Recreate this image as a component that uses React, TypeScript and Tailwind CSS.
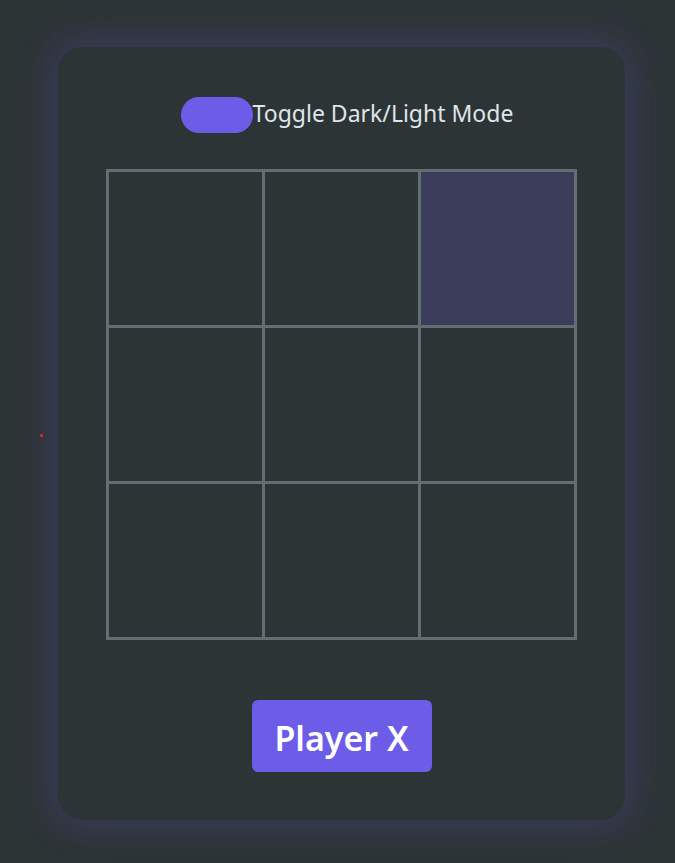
export default function App() {
  const cells = [0, 1, 2, 3, 4, 5, 6, 7, 8];
  return (
    <div className="relative min-h-[863px] bg-[#2d3436] pt-[47px] pl-[58px] font-['Noto_Sans',sans-serif]">
      <div className="absolute left-[40px] top-[434px] h-[3px] w-[3px] rounded-full bg-[#ff1f2a]" />
      <div className="flex w-[567px] flex-col items-center rounded-[24px] bg-[#2d3436] px-12 pt-[50px] pb-[48px] shadow-[0_0_36px_6px_rgba(108,92,231,0.22)]">
        <div className="flex h-9 items-center pl-[11px]">
          <button className="h-9 w-[72px] rounded-full bg-[#6c5ce7]" />
          <span className="-mt-[3px] text-[23px] leading-none text-[#dfe6e9]">Toggle Dark/Light Mode</span>
        </div>
        <div className="mt-9 grid grid-cols-[repeat(3,153px)] grid-rows-[repeat(3,153px)] gap-[3px] bg-[#636e72] p-[3px]">
          {cells.map((i) => (
            <div key={i} className={i === 2 ? "bg-[#3c3c5b]" : "bg-[#2d3436]"} />
          ))}
        </div>
        <button className="mt-[60px] h-[72px] w-[180px] rounded-md bg-[#6c5ce7] pt-[5px] text-[34px] font-semibold text-white">
          Player X
        </button>
      </div>
    </div>
  );
}
